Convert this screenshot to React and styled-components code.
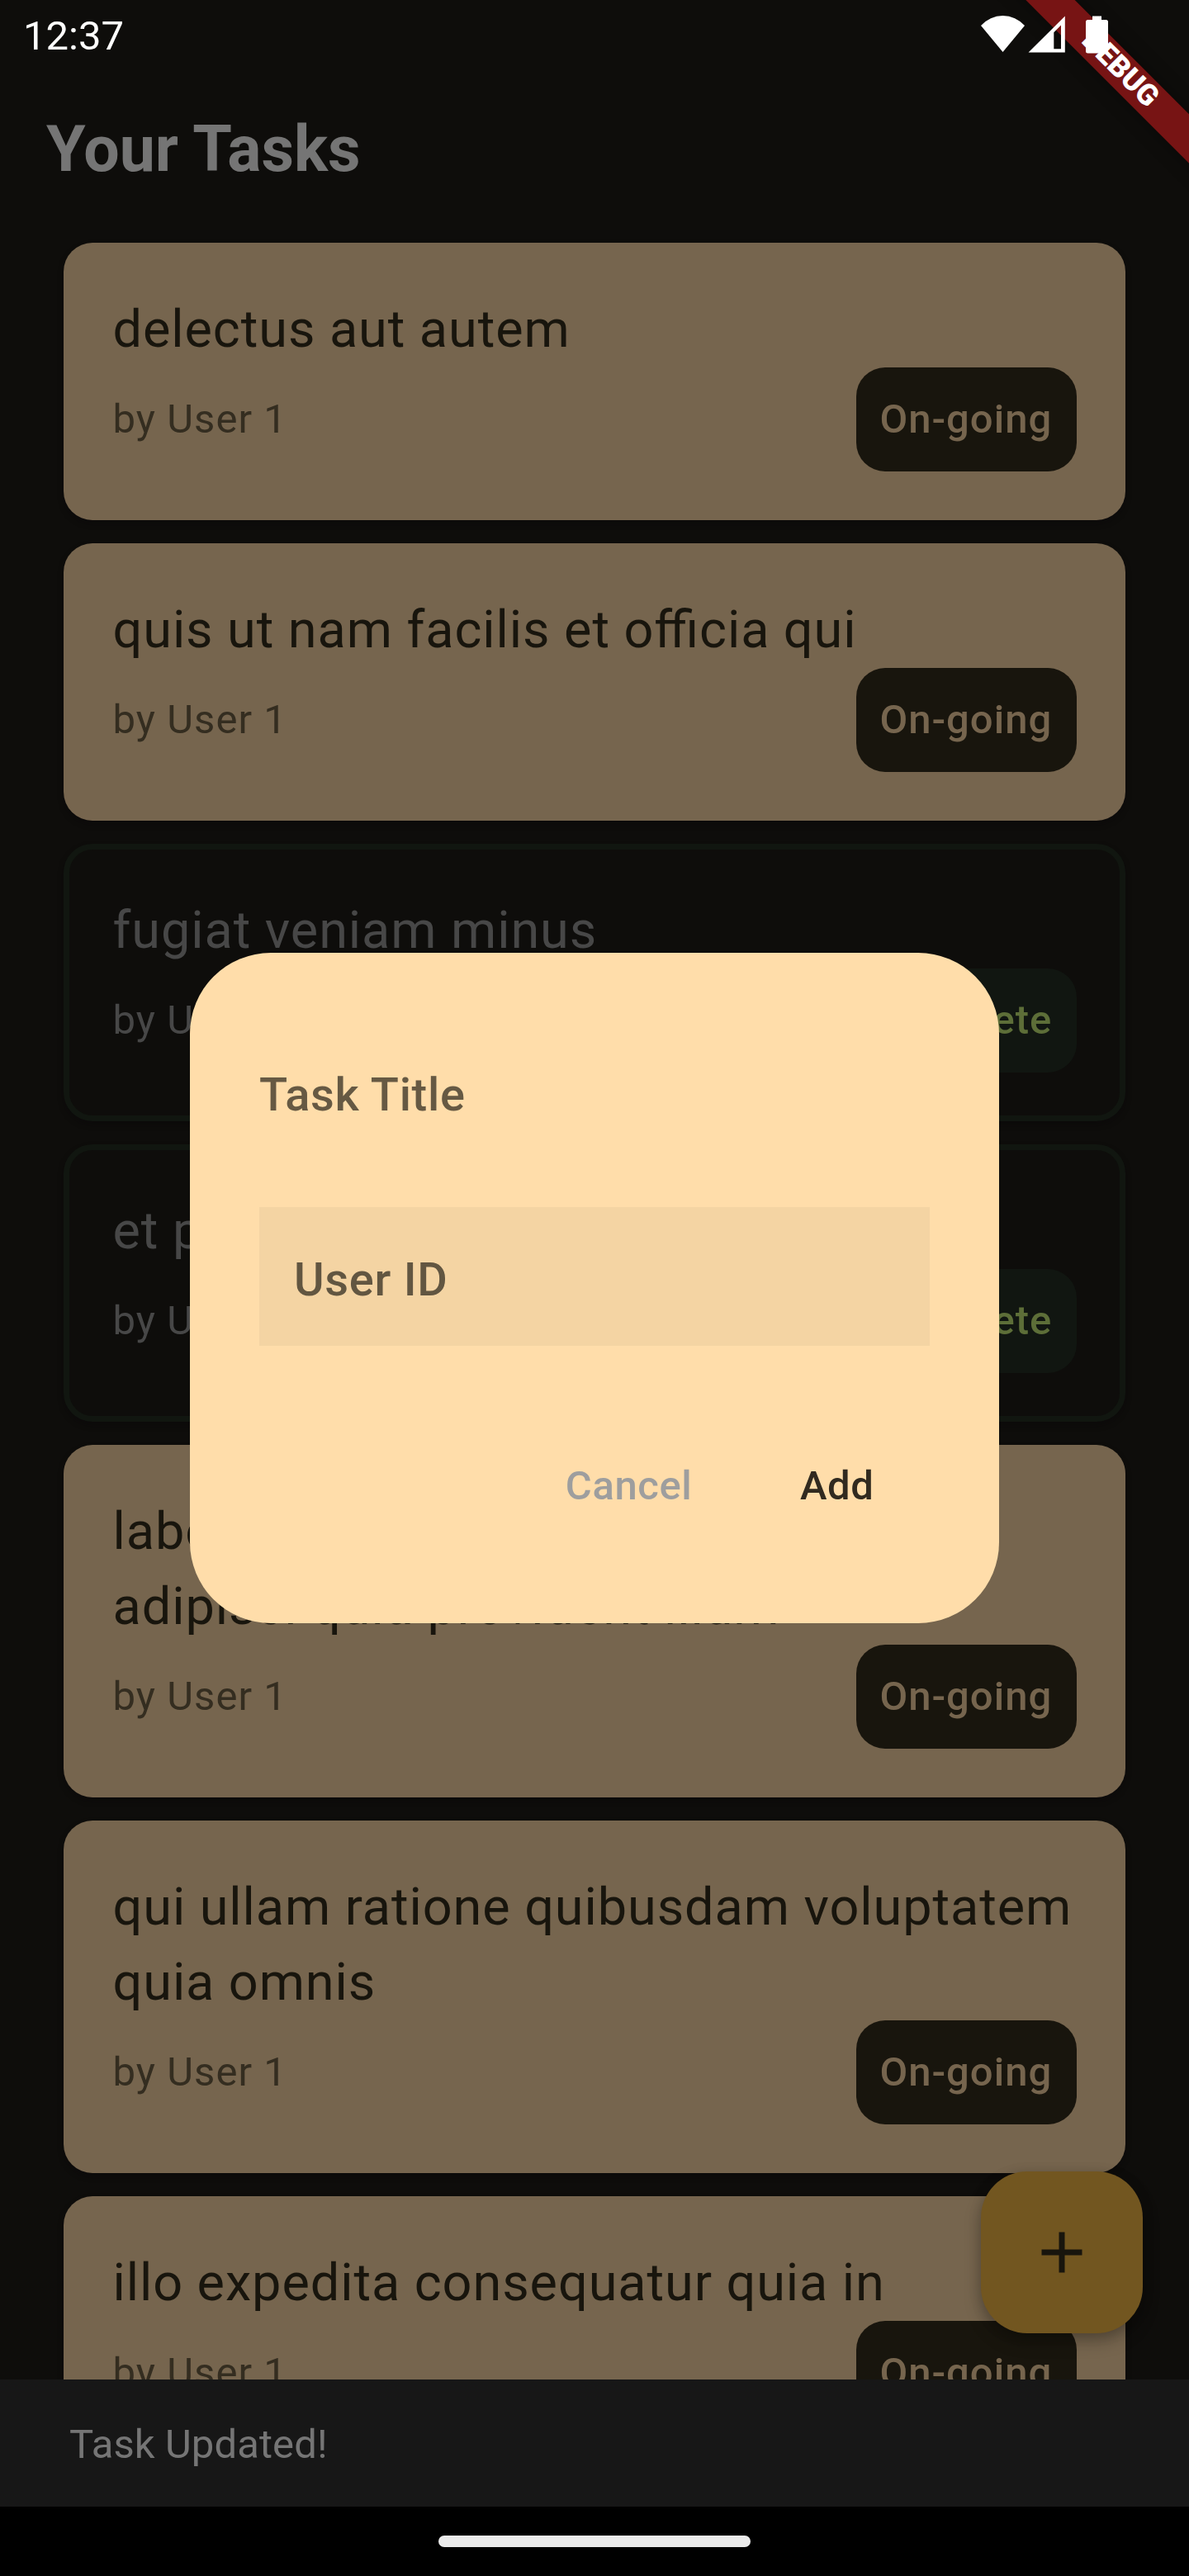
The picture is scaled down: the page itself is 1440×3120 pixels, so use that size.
import React from "react";
import styled, { createGlobalStyle, css } from "styled-components";

const GlobalStyle = createGlobalStyle`
  html, body { margin: 0; padding: 0; background: #0e0d0b; }
  *, *::before, *::after { box-sizing: border-box; }
`;

const Screen = styled.div`
  position: relative;
  display: flex;
  flex-direction: column;
  width: 1440px;
  height: 3120px;
  overflow: hidden;
  background: #0e0d0b;
  font-family: Roboto, "Liberation Sans", sans-serif;
`;

const StatusBar = styled.header`
  display: flex;
  justify-content: space-between;
  height: 84px;
  padding: 15px 96px 0 28px;
  color: #ffffff;
`;

const Clock = styled.time`
  font-size: 49px;
  line-height: 58px;
`;

const StatusIcons = styled.svg`
  position: relative;
  z-index: 3;
  width: 156px;
  height: 48px;
  margin-top: 2px;
`;

const BannerClip = styled.div`
  position: absolute;
  top: 0;
  right: 0;
  z-index: 2;
  width: 300px;
  height: 300px;
  overflow: hidden;
`;

const Banner = styled.div`
  position: absolute;
  top: 63px;
  left: -4px;
  width: 440px;
  height: 42px;
  background: #771414;
  box-shadow: 0 0 21px rgba(0, 0, 0, 0.4);
  color: #ffffff;
  font-size: 35.7px;
  font-weight: 900;
  line-height: 39.6px;
  text-align: center;
  transform: rotate(45deg);
`;

const AppBar = styled.div`
  display: flex;
  align-items: center;
  height: 196px;
  padding: 0 56px 3px;
`;

const PageTitle = styled.h1`
  margin: 0;
  color: #757575;
  font-size: 77px;
  font-weight: 700;
  line-height: 90px;
`;

const TaskList = styled.main`
  display: flex;
  flex: 1;
  flex-direction: column;
  gap: 28px;
  min-height: 0;
  overflow: hidden;
  padding: 14px 77px 0;
`;

const Card = styled.article`
  flex: none;
  padding: 59px 59.5px 59.5px;
  border-radius: 35px;
  background: #76654e;
  color: #18150d;
  box-shadow: 0 4px 7px rgba(8, 7, 10, 0.35);
  ${(p) =>
    p.$done &&
    css`
      padding: 52px 52.5px 52.5px;
      border: 7px solid #111610;
      background: #0e0d0b;
      color: #474747;
    `}
`;

const TaskName = styled.h2`
  margin: 0 0 0.5px;
  font-size: 63px;
  font-weight: 400;
  font-feature-settings: "liga" 1;
  letter-spacing: 0.92px;
  line-height: 91px;
`;

const CardFooter = styled.div`
  display: flex;
  align-items: center;
  justify-content: space-between;
  height: 126px;
`;

const Author = styled.span`
  padding-top: 1.5px;
  color: ${(p) => (p.$done ? "#474747" : "#342d20")};
  font-size: 49px;
  letter-spacing: 1.05px;
  line-height: 58px;
`;

const StatusButton = styled.button`
  height: 126px;
  padding: 1.5px 29.3px 0 28.5px;
  border: 0;
  border-radius: 35px;
  background: ${(p) => (p.$done ? "#111611" : "#18150d")};
  color: ${(p) => (p.$done ? "#5d6e38" : "#76654e")};
  font: 500 49px/58px Roboto, "Liberation Sans", sans-serif;
  letter-spacing: 1px;
`;

const Snackbar = styled.div`
  position: relative;
  z-index: 1;
  display: flex;
  flex: none;
  align-items: center;
  height: 154px;
  padding: 3px 84px 0;
  background: #171717;
  color: #757575;
  font-size: 49px;
  letter-spacing: 0.1px;
  line-height: 58px;
`;

const NavigationBar = styled.footer`
  display: flex;
  flex: none;
  align-items: center;
  justify-content: center;
  height: 84px;
  background: #000000;
`;

const HomeHandle = styled.div`
  width: 378px;
  height: 14px;
  border-radius: 7px;
  background: #ebebeb;
`;

const AddFab = styled.button`
  position: absolute;
  top: 2630px;
  left: 1188px;
  display: flex;
  align-items: center;
  justify-content: center;
  width: 196px;
  height: 196px;
  padding: 0;
  border: 0;
  border-radius: 56px;
  background: #725620;
  box-shadow: 0 10px 20px rgba(0, 0, 0, 0.26), 0 2px 16px rgba(0, 0, 0, 0.12);
`;

const Dialog = styled.section`
  position: absolute;
  top: 1154px;
  left: 230px;
  z-index: 1;
  display: flex;
  flex-direction: column;
  width: 980px;
  height: 812px;
  padding: 84px;
  border-radius: 98px;
  background: #ffddaa;
`;

const Field = styled.label`
  display: flex;
  flex: none;
  align-items: center;
  height: 168px;
  margin-bottom: 56px;
  padding: 7px ${(p) => (p.$filled ? 42 : 0)}px 0;
  background: ${(p) => (p.$filled ? "#f4d4a3" : "transparent")};
  color: ${(p) => (p.$filled ? "#625641" : "#665943")};
  font-size: 56px;
  font-weight: 500;
  letter-spacing: 0.7px;
  line-height: 66px;
`;

const DialogActions = styled.div`
  display: flex;
  gap: 46.6px;
  align-items: center;
  justify-content: flex-end;
  height: 168px;
  margin-top: 28px;
  padding-right: 25.5px;
`;

const DialogButton = styled.button`
  height: 140px;
  padding: 4px 42px 0;
  border: 0;
  background: transparent;
  color: ${(p) => (p.$muted ? "#9e9e9e" : "#312a1f")};
  font: 500 49px/58px Roboto, "Liberation Sans", sans-serif;
  letter-spacing: 0.6px;
`;

const tasks = [
  { title: "delectus aut autem" },
  { title: "quis ut nam facilis et officia qui" },
  { title: "fugiat veniam minus", done: true },
  { title: "et porro tempora", done: true },
  { title: "laboriosam mollitia et enim quasi adipisci quia provident illum" },
  { title: "qui ullam ratione quibusdam voluptatem quia omnis" },
  { title: "illo expedita consequatur quia in" },
];

function TaskCard({ title, done }) {
  return (
    <Card $done={done}>
      <TaskName>{title}</TaskName>
      <CardFooter>
        <Author $done={done}>by User 1</Author>
        <StatusButton $done={done}>{done ? "Complete" : "On-going"}</StatusButton>
      </CardFooter>
    </Card>
  );
}

export default function App() {
  return (
    <>
      <GlobalStyle />
      <Screen>
        <StatusBar>
          <Clock>12:37</Clock>
          <StatusIcons viewBox="1188 17 156 48" fill="#ffffff">
            <path d="M1188 31A35.3 35.3 0 0 1 1241 31L1214.5 63Z" />
            <path
              fillRule="evenodd"
              d="M1245.5 63.5L1289.8 19.5V63.5ZM1276.3 39.3V59.2H1285V30.6Z"
            />
            <path d="M1323 19.5H1334V24H1339.5Q1342 24 1342 26.5V62Q1342 64.5 1339.5 64.5H1317.5Q1315 64.5 1315 62V26.5Q1315 24 1317.5 24H1323Z" />
          </StatusIcons>
        </StatusBar>
        <BannerClip>
          <Banner>DEBUG</Banner>
        </BannerClip>
        <AppBar>
          <PageTitle>Your Tasks</PageTitle>
        </AppBar>
        <TaskList>
          {tasks.map((task) => (
            <TaskCard key={task.title} {...task} />
          ))}
        </TaskList>
        <AddFab aria-label="Add task">
          <svg width="50" height="50" viewBox="0 0 50 50" fill="#18150d">
            <path d="M21.5 0.5H28.5V21.5H49.5V28.5H28.5V49.5H21.5V28.5H0.5V21.5H21.5Z" />
          </svg>
        </AddFab>
        <Snackbar>Task Updated!</Snackbar>
        <NavigationBar>
          <HomeHandle />
        </NavigationBar>
        <Dialog>
          <Field>Task Title</Field>
          <Field $filled>User ID</Field>
          <DialogActions>
            <DialogButton $muted>Cancel</DialogButton>
            <DialogButton>Add</DialogButton>
          </DialogActions>
        </Dialog>
      </Screen>
    </>
  );
}
